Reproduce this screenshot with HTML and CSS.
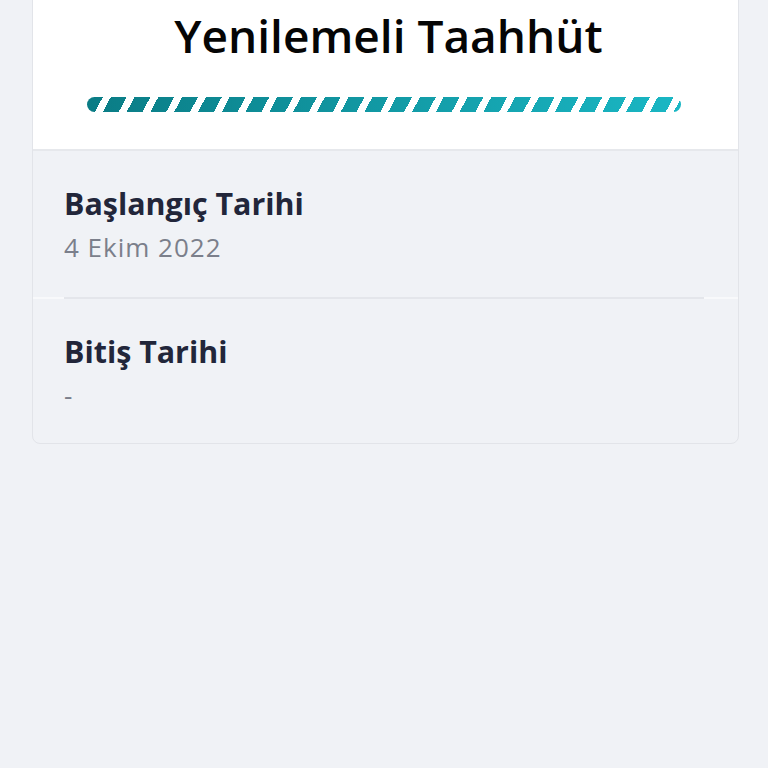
FILE: index.html
```html
<html>
<head>
    <link rel="stylesheet" href="styles.css">
</head>
<body>
    <div class="card">
        <div class="card-header">
            <h1 class="title">Yenilemeli Taahhüt</h1>
            <div class="progress"></div>
        </div>
        <ul class="info-list">
            <li class="info-row">
                <div class="info-label">Başlangıç Tarihi</div>
                <div class="info-value">4 Ekim 2022</div>
            </li>
            <li class="info-row">
                <div class="info-label">Bitiş Tarihi</div>
                <div class="info-value">-</div>
            </li>
        </ul>
    </div>
</body>
</html>
```

FILE: styles.css
```css
body {
    margin: 0;
    padding: 0 29px 0 32px;
    background: #f0f2f6;
    font-family: 'Open Sans', 'Noto Sans', sans-serif;
    min-height: 100vh;
}

.card {
    margin-top: -10px;
    border: 1px solid #e2e4e9;
    border-radius: 8px;
    overflow: hidden;
    background: #f0f2f6;
}

.card-header {
    background: white;
    padding: 16px 57px 37px 54px;
    border-bottom: 2px solid #e6e8ec;
}

.title {
    margin: 0;
    padding-left: 9px;
    text-align: center;
    font-size: 46px;
    font-weight: 600;
    line-height: 56px;
    color: #050505;
}

.progress {
    margin-top: 34px;
    height: 15px;
    border-radius: 8px;
    background:
        repeating-linear-gradient(118deg, transparent 0, transparent 14px, white 14px, white 21px),
        linear-gradient(90deg, #0a7c85, #1ab7c4);
}

.info-list {
    list-style: none;
    margin: 0;
    padding: 0;
}

.info-row {
    padding: 34px 34px 33px 31px;
    position: relative;
}

.info-row:first-child {
    padding-bottom: 35px;
    border-bottom: 2px solid #f8f9fb;
}

.info-row:first-child::after {
    content: '';
    position: absolute;
    left: 31px;
    right: 34px;
    bottom: -2px;
    height: 2px;
    background: #e4e6eb;
}

.info-label {
    font-size: 30.4px;
    font-weight: 700;
    color: #22263a;
    line-height: 38px;
}

.info-value {
    margin-top: 9px;
    font-size: 26px;
    letter-spacing: 1px;
    color: #7b7f8b;
    line-height: 30px;
}
```
